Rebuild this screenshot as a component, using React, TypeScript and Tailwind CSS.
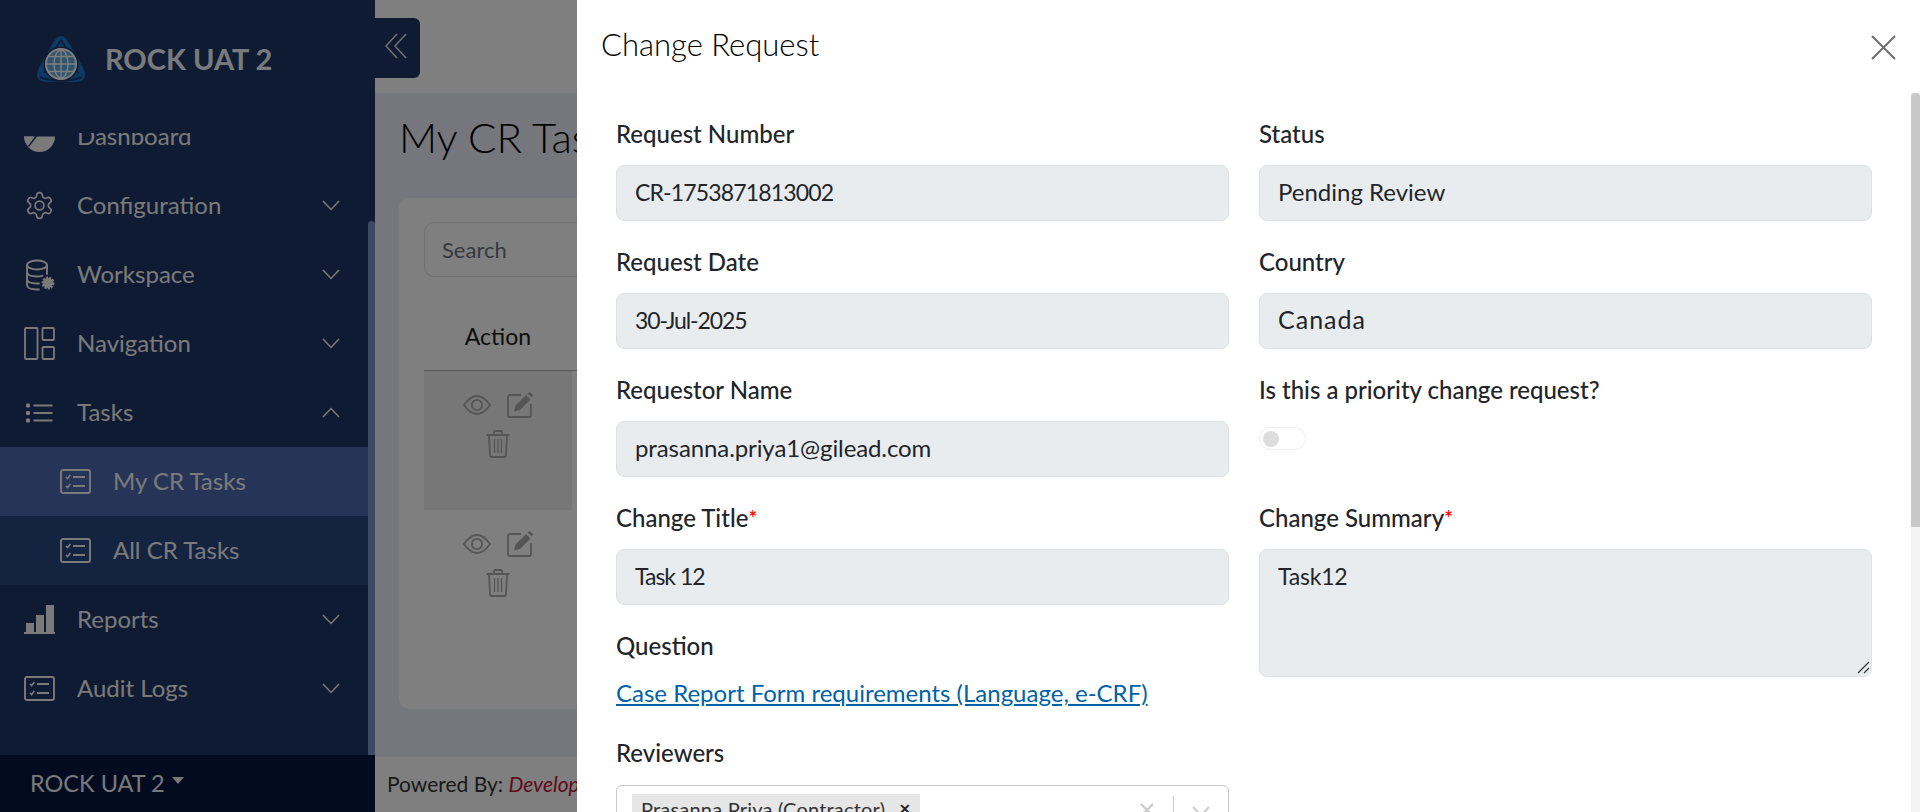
import React from "react";

const FONT = { fontFamily: '"Lato", "Open Sans", sans-serif' };

const s = { fill: "none", stroke: "currentColor", strokeWidth: 1.6, strokeLinecap: "round" as const, strokeLinejoin: "round" as const };

function Logo() {
  return (
    <svg width="50" height="50" viewBox="0 0 50 50" className="shrink-0">
      <path d="M25 1 C30 1 33 8 37 15 C42 24 49 34 49 40 C49 48 40 47 25 47 C10 47 1 48 1 40 C1 34 8 24 13 15 C17 8 20 1 25 1 Z" fill="#1a72c4" />
      <path d="M25 5 C19 14 13 24 8 38 M25 5 C31 14 37 24 42 38 M4 42 C16 47 34 47 46 42" fill="none" stroke="#0e3f78" strokeWidth="2" />
      <circle cx="25" cy="29" r="17.5" fill="#1e3666" />
      <circle cx="25" cy="29" r="16" fill="#ffffff" />
      <circle cx="25" cy="29" r="14" fill="#5fa8dc" />
      <g fill="none" stroke="#ffffff" strokeWidth="1.4">
        <ellipse cx="25" cy="29" rx="7" ry="14" />
        <path d="M25 15 V43 M11 29 H39 M13 21.5 H37 M13 36.5 H37" />
      </g>
    </svg>
  );
}

function ChevronsIcon() {
  return (
    <svg width="24" height="26" viewBox="0 0 24 26" fill="none" stroke="#dfe3ec" strokeWidth="1.5">
      <path d="M13 1 L2 13 L13 25" />
      <path d="M22 1 L11 13 L22 25" />
    </svg>
  );
}

function DashIcon() {
  return (
    <svg width="31" height="31" viewBox="0 0 31 31">
      <path d="M0 15.5 A15.5 15.5 0 0 0 31 15.5 L13 15.5 L5 26 A15.5 15.5 0 0 1 0 15.5 Z M0 15.5 H9 L2 24 Z" fill="currentColor" fillRule="evenodd" />
      <path d="M0 15.5 H11 L4 25 A15.5 15.5 0 0 1 0 15.5 Z" fill="currentColor" />
    </svg>
  );
}

function GearIcon() {
  return (
    <svg width="31" height="33" viewBox="0 0 24 24" {...s} strokeWidth={1.3}>
      <path d="M12.22 2h-.44a2 2 0 0 0-2 2v.18a2 2 0 0 1-1 1.73l-.43.25a2 2 0 0 1-2 0l-.15-.08a2 2 0 0 0-2.73.73l-.22.38a2 2 0 0 0 .73 2.73l.15.1a2 2 0 0 1 1 1.72v.51a2 2 0 0 1-1 1.74l-.15.09a2 2 0 0 0-.73 2.73l.22.38a2 2 0 0 0 2.73.73l.15-.08a2 2 0 0 1 2 0l.43.25a2 2 0 0 1 1 1.73V20a2 2 0 0 0 2 2h.44a2 2 0 0 0 2-2v-.18a2 2 0 0 1 1-1.73l.43-.25a2 2 0 0 1 2 0l.15.08a2 2 0 0 0 2.73-.73l.22-.39a2 2 0 0 0-.73-2.73l-.15-.08a2 2 0 0 1-1-1.74v-.5a2 2 0 0 1 1-1.74l.15-.09a2 2 0 0 0 .73-2.73l-.22-.38a2 2 0 0 0-2.73-.73l-.15.08a2 2 0 0 1-2 0l-.43-.25a2 2 0 0 1-1-1.73V4a2 2 0 0 0-2-2z" />
      <circle cx="12" cy="12" r="3.4" />
    </svg>
  );
}

function DbIcon() {
  return (
    <svg width="30" height="32" viewBox="0 0 30 32" {...s} strokeWidth={1.9}>
      <ellipse cx="12" cy="6" rx="10" ry="4.5" />
      <path d="M2 6 V26 C2 29 6 30.5 12 30.5 H14 M22 6 V15 M2 13 C2 16 6 17.5 12 17.5 C14 17.5 16 17.3 17.5 16.8 M2 20 C2 23 6 24.5 12 24.5 H14" />
      <circle cx="23" cy="24" r="5" fill="currentColor" stroke="currentColor" strokeDasharray="2 1" strokeWidth="3" strokeLinecap="butt" />
    </svg>
  );
}

function NavIcon() {
  return (
    <svg width="31" height="33" viewBox="0 0 31 33" fill="none" stroke="currentColor" strokeWidth="1.8">
      <rect x="1" y="1" width="12.5" height="31" rx="1" />
      <rect x="18.5" y="1" width="11.5" height="12" rx="1" />
      <rect x="18.5" y="20" width="11.5" height="12" rx="1" />
    </svg>
  );
}

function ListIcon() {
  return (
    <svg width="27" height="20" viewBox="0 0 27 20" fill="currentColor">
      <rect x="0" y="0.5" width="4" height="4" rx="1" />
      <rect x="0" y="8" width="4" height="4" rx="1" />
      <rect x="0" y="15.5" width="4" height="4" rx="1" />
      <rect x="7.5" y="1.5" width="19" height="2" />
      <rect x="7.5" y="9" width="19" height="2" />
      <rect x="7.5" y="16.5" width="19" height="2" />
    </svg>
  );
}

function CheckListIcon() {
  return (
    <svg width="31" height="25" viewBox="0 0 31 25" fill="none" stroke="currentColor" strokeWidth="1.9">
      <rect x="1" y="1" width="29" height="23" rx="2" />
      <path d="M13 8 H25 M13 17 H25" />
      <path d="M6 8 L7.6 9.6 L10.4 6 M6 17 L7.6 18.6 L10.4 15" strokeWidth="1.6" />
    </svg>
  );
}

function BarsIcon() {
  return (
    <svg width="31" height="29" viewBox="0 0 31 29" fill="currentColor">
      <rect x="2" y="18" width="8" height="9" />
      <rect x="12" y="10" width="8" height="17" />
      <rect x="22" y="0" width="8" height="27" />
      <rect x="0" y="27" width="31" height="2" />
    </svg>
  );
}

function Chev({ up }: { up?: boolean }) {
  return (
    <svg width="18" height="11" viewBox="0 0 18 11" fill="none" stroke="currentColor" strokeWidth="1.5">
      <path d={up ? "M1 10 L9 1.5 L17 10" : "M1 1 L9 9.5 L17 1"} />
    </svg>
  );
}

function EyeIcon() {
  return (
    <svg width="28" height="20" viewBox="0 0 28 20" fill="none" stroke="#ababab" strokeWidth="1.8">
      <path d="M1 10 C6 3 10 1 14 1 C18 1 22 3 27 10 C22 17 18 19 14 19 C10 19 6 17 1 10 Z" />
      <circle cx="14" cy="10" r="5.2" />
    </svg>
  );
}

function EditIcon() {
  return (
    <svg width="26" height="26" viewBox="0 0 26 26">
      <path d="M14 3 H3 A2 2 0 0 0 1 5 V23 A2 2 0 0 0 3 25 H22 A2 2 0 0 0 24 23 V12" fill="none" stroke="#ababab" strokeWidth="1.8" />
      <path d="M7 19.5 L8.5 13.5 L19 3 L23.5 7.5 L13 18 Z M20.5 1.5 L22 0.5 A1 1 0 0 1 23.5 0.5 L25.5 2.5 A1 1 0 0 1 25.5 4 L24.5 5.5 Z" fill="#ababab" />
    </svg>
  );
}

function TrashIcon() {
  return (
    <svg width="24" height="28" viewBox="0 0 24 28" fill="none" stroke="#ababab" strokeWidth="1.8">
      <path d="M0.5 5 H23.5 M8 5 V2 A1 1 0 0 1 9 1 H15 A1 1 0 0 1 16 2 V5" />
      <path d="M3 5 L4 25 A2 2 0 0 0 6 27 H18 A2 2 0 0 0 20 25 L21 5" />
      <path d="M8.5 9 V23 M12 9 V23 M15.5 9 V23" strokeWidth="1.3" />
    </svg>
  );
}

function NavRow({ icon, label, chev, up }: { icon: React.ReactNode; label: string; chev?: boolean; up?: boolean }) {
  return (
    <div className="flex h-[69px] items-center pl-[24px] pr-[28px] text-[24px] text-[#f4f4f4]">
      <div className="flex w-[31px] shrink-0 justify-center">{icon}</div>
      <span className="ml-[22px] flex-1 pb-[2px]">{label}</span>
      {chev && <Chev up={up} />}
    </div>
  );
}

function SubRow({ label, active }: { label: string; active?: boolean }) {
  return (
    <div className={`flex h-[69px] items-center pl-[60px] text-[24px] text-[#f4f4f4] ${active ? "bg-[#4c6aae]" : "bg-[#28467e]"}`}>
      <CheckListIcon />
      <span className="ml-[22px] pb-[2px]">{label}</span>
    </div>
  );
}

function Field({ label, value, req, type }: { label: string; value: string; req?: boolean; type: string }) {
  return (
    <div>
      <Label req={req}>{label}</Label>
      <div className={`mb-[29px] flex h-[56px] items-center rounded-[8px] border border-[#dee2e6] bg-[#e9ecef] px-[18px] pb-[2px] text-[#212529] ${type}`}>
        {value}
      </div>
    </div>
  );
}

function Label({ children, req }: { children: React.ReactNode; req?: boolean }) {
  return (
    <div className="mb-[19px] h-[24px] text-[24px] font-medium leading-[24px] text-[#212529]">
      {children}
      {req && <span className="relative top-[-1px] text-[22px] text-[#ff0000]">*</span>}
    </div>
  );
}

function ActionRow({ selected }: { selected?: boolean }) {
  return (
    <div className={`flex h-[139px] w-[148px] flex-col items-center pt-[21px] ${selected ? "bg-[#eeeeee]" : ""}`}>
      <div className="flex items-center gap-[16px]">
        <EyeIcon />
        <EditIcon />
      </div>
      <div className="mt-[12px]">
        <TrashIcon />
      </div>
    </div>
  );
}

export default function App() {
  return (
    <div className="relative flex h-screen w-full overflow-hidden bg-white" style={FONT}>
      {/* Sidebar */}
      <aside className="flex h-full w-[375px] shrink-0 flex-col bg-[#1e3666]">
        <div className="flex h-[133px] shrink-0 items-start pl-[36px] pt-[35px]">
          <Logo />
          <span className="ml-[19px] mt-[6px] text-[29px] font-bold leading-[36px] text-[#ffffff] opacity-[0.95]">ROCK UAT 2</span>
        </div>
        <div className="flex min-h-0 flex-1">
          <div className="min-w-0 flex-1 overflow-hidden">
            <div className="-mt-[31px]">
              <NavRow icon={<DashIcon />} label="Dashboard" />
              <NavRow icon={<GearIcon />} label="Configuration" chev />
              <NavRow icon={<DbIcon />} label="Workspace" chev />
              <NavRow icon={<NavIcon />} label="Navigation" chev />
              <NavRow icon={<ListIcon />} label="Tasks" chev up />
              <SubRow label="My CR Tasks" active />
              <SubRow label="All CR Tasks" />
              <NavRow icon={<BarsIcon />} label="Reports" chev />
              <NavRow icon={<CheckListIcon />} label="Audit Logs" chev />
            </div>
          </div>
          <div className="flex w-[7px] shrink-0 flex-col">
            <div className="h-[88px]" />
            <div className="flex-1 rounded-t-[4px] bg-[#7994ca]" />
          </div>
        </div>
        <div className="flex h-[57px] shrink-0 items-center bg-[#041640] pl-[30px] text-[23.5px] text-[#f0f0f0]">
          ROCK UAT 2
          <span className="mb-[6px] ml-[7px] h-0 w-0 border-x-[6px] border-t-[7px] border-x-transparent border-t-[#f0f0f0]" />
        </div>
      </aside>

      {/* Page */}
      <main className="flex min-w-0 flex-1 flex-col">
        <div className="h-[93px] shrink-0 bg-white" />
        <div className="min-h-0 flex-1 bg-[#eceef8] pl-[24px] pr-[20px]">
          <h1 className="mt-[14px] h-[60px] text-[42px] font-light leading-[60px] text-[#000000]">My CR Tasks</h1>
          <div className="mt-[31px] h-[511px] overflow-hidden rounded-[10px] bg-white px-[25px] pt-[24px]">
            <div className="flex h-[55px] w-[500px] items-center rounded-[10px] border border-[#dee2e6] px-[17px] text-[22px] text-[#6c757d]">Search</div>
            <div className="flex h-[94px] w-full items-center border-b border-[#b0b0b0] pt-[26px]">
              <span className="w-[148px] text-center text-[23px] text-[#1a1a1a]">Action</span>
            </div>
            <ActionRow selected />
            <ActionRow />
          </div>
        </div>
        <div className="flex h-[55px] shrink-0 items-center bg-white pb-[1px] pl-[12px] text-[21px] text-[#333333]">
          Powered By:&nbsp;<i className="text-[#c0143c]">Developed by team</i>
        </div>
      </main>

      {/* Sidebar collapse handle */}
      <div className="absolute left-[375px] top-[18px] flex h-[60px] w-[45px] items-center justify-center rounded-r-[6px] bg-[#1e3666] pb-[4px] pr-[4px]">
        <ChevronsIcon />
      </div>

      {/* Backdrop */}
      <div className="absolute inset-0 bg-black/50" />

      {/* Drawer */}
      <section className="absolute bottom-0 right-0 top-0 flex w-[1343px] flex-col bg-white">
        <header className="flex h-[93px] shrink-0 items-start justify-between pl-[24px] pr-[24px] pt-[26px]">
          <h2 className="text-[31px] font-light leading-[36px] text-[#000000]">Change Request</h2>
          <svg width="25" height="25" viewBox="0 0 25 25" fill="none" stroke="#6e6e6e" strokeWidth="2" className="mt-[9px]">
            <path d="M1 1 L24 24 M24 1 L1 24" />
          </svg>
        </header>
        <div className="flex min-h-0 flex-1">
          <div className="grid min-w-0 flex-1 grid-cols-[613px_613px] content-start gap-x-[30px] overflow-hidden pl-[39px] pt-[29px]">
            <div>
              <Field label="Request Number" value="CR-1753871813002" type="text-[23px] tracking-[-0.85px]" />
              <Field label="Request Date" value="30-Jul-2025" type="text-[23px] tracking-[-1.1px]" />
              <Field label="Requestor Name" value="prasanna.priya1@gilead.com" type="text-[24px] tracking-[-0.1px]" />
              <Field label="Change Title" value="Task 12" req type="text-[23px] tracking-[-1px]" />
              <Label>Question</Label>
              <div className="pt-[4px]">
                <a className="block h-[24px] text-[24px] leading-[24px] text-[#0062a8] underline">Case Report Form requirements (Language, e-CRF)</a>
              </div>
              <div className="mb-[20px] mt-[36px] h-[24px] text-[24px] font-medium leading-[24px] text-[#212529]">Reviewers</div>
              <div className="flex h-[56px] items-start rounded-[6px] border border-[#c8c8c8] pl-[15px] pr-[10px] pt-[8px]">
                <div className="flex h-[30px] items-center bg-[#e6e6e6] pl-[9px] pr-[9px] text-[20px] tracking-[0.2px] text-[#333333]">
                  Prasanna Priya (Contractor)
                  <span className="ml-[14px] text-[14px] font-bold leading-none text-[#222222]">✕</span>
                </div>
                <div className="flex-1" />
                <svg width="16" height="16" viewBox="0 0 16 16" stroke="#cccccc" strokeWidth="2.4" className="mt-[8px]"><path d="M2 2 L14 14 M14 2 L2 14" /></svg>
                <div className="mx-[18px] mt-[2px] h-[36px] w-px bg-[#cccccc]" />
                <svg width="18" height="11" viewBox="0 0 18 11" fill="none" stroke="#cccccc" strokeWidth="2" className="mr-[8px] mt-[12px]"><path d="M1 1 L9 9.5 L17 1" /></svg>
              </div>
            </div>
            <div>
              <Field label="Status" value="Pending Review" type="text-[24px]" />
              <Field label="Country" value="Canada" type="text-[25px] tracking-[1px]" />
              <Label>Is this a priority change request?</Label>
              <div className="pb-[56px] pt-[6px]">
                <div className="flex h-[23px] w-[47px] items-center rounded-full border border-[#eeeeee] pl-[3px]">
                  <span className="h-[16px] w-[16px] rounded-full bg-[#dddddd]" />
                </div>
              </div>
              <Label req>Change Summary</Label>
              <div className="relative h-[128px] rounded-[8px] border border-[#dee2e6] bg-[#e9ecef] px-[18px] pt-[11px] text-[23px] leading-[30px] tracking-[-0.2px] text-[#212529]">
                Task12
                <svg width="13" height="13" viewBox="0 0 13 13" stroke="#333333" strokeWidth="1.2" className="absolute bottom-[2px] right-[1px]"><path d="M1 12 L12 1 M7 12 L12 7" /></svg>
              </div>
            </div>
          </div>
          <div className="w-[9px] shrink-0 bg-[#f4f4f4]">
            <div className="h-[434px] rounded-t-[4px] bg-[#c8c8c8]" />
          </div>
        </div>
      </section>
    </div>
  );
}
